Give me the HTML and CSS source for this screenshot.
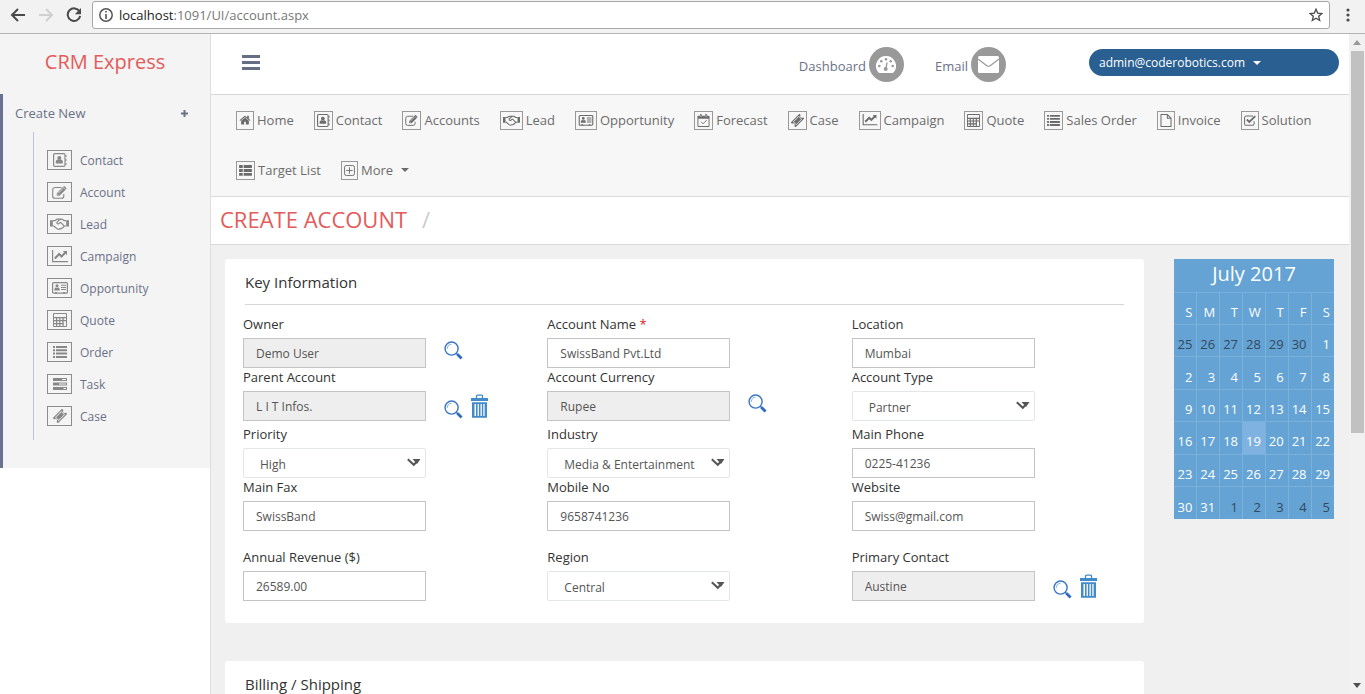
FILE: index.html
```html
<!DOCTYPE html>
<html lang="en">
<head>
<meta charset="utf-8">
<title>CRM Express - Create Account</title>
<link rel="stylesheet" href="styles.css">
</head>
<body>
<svg class="sprite" aria-hidden="true">
  <symbol id="home" viewBox="0 150 1792 1450"><path fill="currentColor" d="M1472 992v480q0 26-19 45t-45 19h-384v-384h-256v384h-384q-26 0-45-19t-19-45v-480q0-1 .5-3t.5-3l575-474 575 474q1 2 1 6zm223-69l-62 74q-8 9-21 11h-3q-13 0-21-7l-692-577-692 577q-12 8-24 7-13-2-21-11l-62-74q-8-10-7-23.5t11-21.5l719-599q32-26 76-26t76 26l244 204v-195q0-14 9-23t23-9h192q14 0 23 9t9 23v408l219 182q10 8 11 21.5t-7 23.5z"/></symbol>
  <symbol id="contact" viewBox="0 0 14 14"><rect x=".6" y=".6" width="11.4" height="12.8" rx="1.2" fill="none" stroke="currentColor" stroke-width="1.2"/><circle cx="6.3" cy="4.9" r="2" fill="currentColor"/><path fill="currentColor" d="M2.8 10.6V9c0-1.5.8-2.3 2-2.4 1 .6 2 .6 3 0 1.200.1 2 .9 2 2.400v1.600zM12.500 2h1v2h-1zM12.500 6h1v2h-1zM12.500 10h1v2h-1z"/></symbol>
  <symbol id="account" viewBox="0 0 15 13"><path fill="none" stroke="currentColor" stroke-width="1.1" d="M9.500 1.500H3A2.300 2.300 0 0 0 .7 3.800V10A2.300 2.300 0 0 0 3 12.300h6.500A2.300 2.300 0 0 0 11.800 10V8"/><path fill="currentColor" d="M4.800 9.800V7.200L10.900 1l2.700 2.700-6.100 6.100zM11.500.5c.5-.5 1-.5 1.500 0l1.200 1.200c.5.500.5 1 0 1.500l-.3.300-2.700-2.700z"/><path stroke="#f6f6f6" stroke-width=".7" d="m6.300 7.200 4.800-4.900M5.400 8l1.200 1.200"/></symbol>
  <symbol id="lead" viewBox="0 0 19 12"><path fill="currentColor" d="M0 2.200h2.800v6.300H0zM16.200 2.200H19v6.300h-2.800z"/><path fill="none" stroke="currentColor" stroke-width="1.200" stroke-linejoin="round" d="M2.800 2.700h2L7 1.200h2.200l1.300.8M2.800 8h1l3 2.600c1.200.9 2.400.8 3.200.1 1 .3 1.800-.1 2-.9.9.1 1.500-.3 1.600-1.100l.7-.7h1.900M16.200 2.700h-1.900L12.200 1.200H10L7 4.300c-.3 1 .2 1.700 1 1.700.9.1 1.500-.9 2-1.400h1l3 3.200"/></symbol>
  <symbol id="campaign" viewBox="0 0 16 13"><path fill="currentColor" d="M0 0h1.200v11H16v1.200H0zM15 1v4.200l-1.400-1.400-4.100 4.100-2.300-2.300-3.600 3.600-1.500-1.500L7.200 2.600 9.500 5l2.700-2.700L10.900 1z"/></symbol>
  <symbol id="opportunity" viewBox="0 0 16 12"><rect x=".6" y=".6" width="14.800" height="10.600" rx="1" fill="none" stroke="currentColor" stroke-width="1.200"/><circle cx="5" cy="3.800" r="1.500" fill="currentColor"/><path fill="currentColor" d="M2.300 8.500c0-1.700.4-2.900 1.500-3.100.8.5 1.700.5 2.400 0 1.200.2 1.600 1.400 1.600 3.100zM9 2.700h5v1H9zM9 4.900h5v1H9zM9 7.100h5v1H9zM3 10h2v1.500H3zM11 10h2v1.500h-2z"/></symbol>
  <symbol id="forecast" viewBox="0 0 13 14"><path fill="currentColor" fill-rule="evenodd" d="M1 1.800h1.600V1.200Q2.600 0 3.700 0t1.100 1.200v.6h3.400v-.6Q8.200 0 9.300 0t1.100 1.200v.6H12q1 0 1 1V13q0 1-1 1H1q-1 0-1-1V2.800q0-1 1-1zM1 5v8h11V5z"/><path fill="none" stroke="currentColor" d="m4 8.500 2 2 3.800-3.800"/><path stroke="#f6f6f6" stroke-width=".7" d="M3.700 1.200v2M9.300 1.200v2"/></symbol>
  <symbol id="case" viewBox="0 0 14 14"><g transform="rotate(-45 7 7)"><path fill="currentColor" fill-rule="evenodd" d="M.4 3.300h13.200v2a1.700 1.700 0 0 0 0 3.400v2H.4v-2a1.700 1.700 0 0 0 0-3.400zM2.600 4.500v5h8.800v-5z"/><path fill="currentColor" d="M3.200 5.100h7.600v3.800H3.200z"/></g></symbol>
  <symbol id="quote" viewBox="0 0 14 14"><path fill="currentColor" fill-rule="evenodd" d="M1 0h12q1 0 1 1v12q0 1-1 1H1q-1 0-1-1V1q0-1 1-1zm0 1v3h12V1zm0 4.300v1.800h2V5.300zm3.200 0v1.800h2V5.300zm3.200 0v1.800h2V5.300zm3.300 0v1.800H13V5.300zM1 8.200V10h2V8.200zm3.200 0V10h2V8.200zm3.200 0V10h2V8.200zM1 11.200V13h2v-1.800zm3.200 0V13h2v-1.800zm3.200 0V13h2v-1.800zm3.300-3V13H13V8.200z"/></symbol>
  <symbol id="order" viewBox="0 0 14 12"><path fill="currentColor" d="M0 0h2v2H0zM3 0h11v2H3zM0 3.300h2v2H0zM3 3.300h11v2H3zM0 6.600h2v2H0zM3 6.600h11v2H3zM0 9.900h2v2H0zM3 9.900h11v2H3z"/></symbol>
  <symbol id="task" viewBox="0 0 14 12"><path fill="currentColor" fill-rule="evenodd" d="M0 0h14v3H0zM9 1v1h4V1zM0 4.500h14v3H0zM6 5.500v1h7v-1zM0 9h14v3H0zM10.500 10v1H13v-1z"/></symbol>
  <symbol id="invoice" viewBox="0 0 12 14"><path fill="none" stroke="currentColor" stroke-width="1.100" stroke-linejoin="round" d="M.6.6h6.900l3.900 3.900v8.900H.6zM7.500.6v3.900h3.900"/></symbol>
  <symbol id="solution" viewBox="0 0 14 13"><path fill="none" stroke="currentColor" stroke-width="1.200" d="M10.500 1.200H2.600a2 2 0 0 0-2 2v7a2 2 0 0 0 2 2h7.200a2 2 0 0 0 2-2V7.500"/><path fill="none" stroke="currentColor" stroke-width="2.200" d="m3.200 5.300 3 3 7-7"/></symbol>
  <symbol id="target" viewBox="0 0 14 12"><path fill="currentColor" d="M0 0h4v3.200H0zM5 0h9v3.200H5zM0 4.300h4v3.200H0zM5 4.300h9v3.200H5zM0 8.600h4v3.200H0zM5 8.600h9v3.200H5z"/></symbol>
  <symbol id="more" viewBox="0 0 12 12"><rect x=".6" y=".6" width="10.800" height="10.800" rx="1.800" fill="none" stroke="currentColor"/><path stroke="currentColor" d="M2.500 6h7M6 2.500v7"/></symbol>
  <symbol id="search" viewBox="0 0 20 20"><circle cx="8" cy="8" r="6.900" fill="#fff" stroke="#3a76c4" stroke-width="1.500"/><path fill="none" stroke="#86b4e6" stroke-width="1.200" d="M3.500 8.200A4.700 4.700 0 0 1 8 3.400"/><path stroke="#3a76c4" stroke-width="1.500" d="m12.500 12.500 2 2"/><path stroke="#2f6cc0" stroke-width="3" d="m14 14 4.500 4.500"/></symbol>
  <symbol id="trash" viewBox="0 0 17 25"><path fill="none" stroke="#428bca" stroke-width="1.300" d="M5.500 4V2q0-.9.900-.9h4.200q.9 0 .9.900v2"/><path fill="#428bca" fill-rule="evenodd" d="M0 4h17v3H0zM1 8.300h15v15.500H1zM3.500 10v12H5V10zM6.600 10v12h1.300V10zM9.500 10v12h1.300V10zM12.300 10v12h1.300V10z"/></symbol>
  <symbol id="arrow" viewBox="0 0 14 9"><path fill="none" stroke="#555" stroke-width="2" d="m.8 1.200 6 5.600L10 3.500"/><path fill="#555" d="M5.500 1H13.500L10 6z"/></symbol>
</svg>

<header class="browser">
  <button class="chrome-button" aria-label="Back"><svg width="16" height="14" viewBox="0 0 16 14"><path fill="none" stroke="#4a4a4a" stroke-width="2" d="M15 7H2M8 1 2 7l6 6"/></svg></button>
  <button class="chrome-button" aria-label="Forward" disabled><svg width="16" height="14" viewBox="0 0 16 14"><path fill="none" stroke="#d0d0d0" stroke-width="2" d="M1 7h13M8 1l6 6-6 6"/></svg></button>
  <button class="chrome-button" aria-label="Reload"><svg width="16" height="16" viewBox="0 0 16 16"><path fill="none" stroke="#4a4a4a" stroke-width="2" d="M13.500 4.500A6.300 6.300 0 1 0 14.200 9"/><path fill="#4a4a4a" d="M15 1v6.200H8.800z"/></svg></button>
  <div class="omnibox">
    <svg width="14" height="14" viewBox="0 0 14 14"><circle cx="7" cy="7" r="6.200" fill="none" stroke="#555" stroke-width="1.500"/><path fill="#555" d="M6.200 3h1.600v1.600H6.200zM6.200 6h1.600v5H6.200z"/></svg>
    <div class="url"><span class="host">localhost</span>:1091/UI/account.aspx</div>
    <button class="chrome-button" aria-label="Bookmark"><svg width="14" height="14" viewBox="0 0 14 14"><path fill="none" stroke="#4a4a4a" stroke-width="1.300" d="m7 1.200 1.700 3.900 4.200.4-3.200 2.800 1 4.200L7 10.300l-3.700 2.200 1-4.200L1.100 5.500l4.200-.4z"/></svg></button>
  </div>
  <button class="chrome-button menu-dots" aria-label="Menu"><svg width="4" height="14" viewBox="0 0 4 14"><g fill="#4a4a4a"><circle cx="2" cy="2" r="1.600"/><circle cx="2" cy="7" r="1.600"/><circle cx="2" cy="12" r="1.600"/></g></svg></button>
</header>

<div class="viewport">
  <aside class="sidebar">
    <a class="brand" href="#">CRM Express</a>
    <nav class="side-menu" aria-label="Create New">
      <a class="side-head" href="#"><span>Create New</span><svg width="7" height="7" viewBox="0 0 7 7"><path stroke="currentColor" stroke-width="2" d="M3.500 0v7M0 3.500h7"/></svg></a>
      <ul class="side-list">
        <li><a href="#"><span class="side-icon"><svg width="14" height="14"><use href="#contact"/></svg></span>Contact</a></li>
        <li><a href="#"><span class="side-icon"><svg width="15" height="13"><use href="#account"/></svg></span>Account</a></li>
        <li><a href="#"><span class="side-icon"><svg width="19" height="12"><use href="#lead"/></svg></span>Lead</a></li>
        <li><a href="#"><span class="side-icon"><svg width="16" height="13"><use href="#campaign"/></svg></span>Campaign</a></li>
        <li><a href="#"><span class="side-icon"><svg width="16" height="12"><use href="#opportunity"/></svg></span>Opportunity</a></li>
        <li><a href="#"><span class="side-icon"><svg width="14" height="14"><use href="#quote"/></svg></span>Quote</a></li>
        <li><a href="#"><span class="side-icon"><svg width="14" height="12"><use href="#order"/></svg></span>Order</a></li>
        <li><a href="#"><span class="side-icon"><svg width="14" height="12"><use href="#task"/></svg></span>Task</a></li>
        <li><a href="#"><span class="side-icon"><svg width="14" height="14"><use href="#case"/></svg></span>Case</a></li>
      </ul>
    </nav>
  </aside>

  <main class="main">
    <div class="topbar">
      <button class="burger" aria-label="Toggle menu"><svg width="18" height="15" viewBox="0 0 18 15"><path stroke="#666d85" stroke-width="3" d="M0 1.500h18M0 7.500h18M0 13.500h18"/></svg></button>
      <a class="shortcut" href="#"><span class="shortcut-text">Dashboard</span><span class="disc"><svg width="20" height="18" viewBox="0 0 20 18"><path fill="#fff" d="M10 0a10 10 0 0 1 8.500 15.300q-1 1.700-2 1.700h-13q-1 0-2-1.700A10 10 0 0 1 10 0z"/><g fill="#999"><circle cx="3.300" cy="10" r="1.300"/><circle cx="5.300" cy="5.200" r="1.300"/><circle cx="10" cy="3.200" r="1.300"/><circle cx="14.700" cy="5.200" r="1.300"/><circle cx="16.700" cy="10" r="1.300"/><circle cx="9.700" cy="13" r="2"/></g><path stroke="#999" stroke-width="1.300" d="m9.800 13 1.300-6.500"/></svg></span></a>
      <a class="shortcut" href="#"><span class="shortcut-text">Email</span><span class="disc"><svg width="21" height="17" viewBox="0 0 21 17"><rect width="21" height="17" rx="1.500" fill="#fff"/><path fill="none" stroke="#999" stroke-width="1.200" d="m0 3 8.500 6.500q2 1.500 4 0L21 3"/></svg></span></a>
      <button class="user">admin@coderobotics.com <span class="caret"></span></button>
    </div>

    <nav class="modules" aria-label="Modules">
      <a href="#"><span class="box"><svg width="12" height="10"><use href="#home"/></svg></span>Home</a>
      <a href="#"><span class="box"><svg width="13" height="13"><use href="#contact"/></svg></span>Contact</a>
      <a href="#"><span class="box"><svg width="13" height="11"><use href="#account"/></svg></span>Accounts</a>
      <a href="#"><span class="box"><svg width="17" height="11"><use href="#lead"/></svg></span>Lead</a>
      <a href="#"><span class="box"><svg width="16" height="11"><use href="#opportunity"/></svg></span>Opportunity</a>
      <a href="#"><span class="box"><svg width="13" height="13"><use href="#forecast"/></svg></span>Forecast</a>
      <a href="#"><span class="box"><svg width="13" height="13"><use href="#case"/></svg></span>Case</a>
      <a href="#"><span class="box"><svg width="16" height="12"><use href="#campaign"/></svg></span>Campaign</a>
      <a href="#"><span class="box"><svg width="13" height="13"><use href="#quote"/></svg></span>Quote</a>
      <a href="#"><span class="box"><svg width="13" height="11"><use href="#order"/></svg></span>Sales Order</a>
      <a href="#"><span class="box"><svg width="12" height="13"><use href="#invoice"/></svg></span>Invoice</a>
      <a href="#"><span class="box"><svg width="12" height="11"><use href="#solution"/></svg></span>Solution</a>
      <a href="#"><span class="box"><svg width="13" height="11"><use href="#target"/></svg></span>Target List</a>
      <a href="#"><span class="box"><svg width="11" height="11"><use href="#more"/></svg></span>More <span class="caret"></span></a>
    </nav>

    <div class="title-bar"><h1>Create Account</h1><span class="slash">/</span></div>

    <div class="content">
      <form class="cards">
        <section class="card">
          <h2>Key Information</h2>
          <div class="fields">
            <div class="field"><label for="owner">Owner</label><div class="control"><input id="owner" value="Demo User" readonly><div class="tools"><button type="button" aria-label="Find owner"><svg width="19" height="19"><use href="#search"/></svg></button></div></div></div>
            <div class="field"><label for="name">Account Name <span class="required">*</span></label><div class="control"><input id="name" value="SwissBand Pvt.Ltd"></div></div>
            <div class="field"><label for="location">Location</label><div class="control"><input id="location" value="Mumbai"></div></div>

            <div class="field"><label for="parent">Parent Account</label><div class="control"><input id="parent" value="L I T Infos." readonly><div class="tools"><button type="button" aria-label="Find parent account"><svg width="19" height="19"><use href="#search"/></svg></button><button type="button" aria-label="Clear parent account"><svg width="17" height="25"><use href="#trash"/></svg></button></div></div></div>
            <div class="field"><label for="currency">Account Currency</label><div class="control"><input id="currency" value="Rupee" readonly><div class="tools"><button type="button" aria-label="Find currency"><svg width="19" height="19"><use href="#search"/></svg></button></div></div></div>
            <div class="field"><label for="type">Account Type</label><div class="control"><div class="select"><select id="type"><option>Partner</option></select><svg class="arrow" width="14" height="9"><use href="#arrow"/></svg></div></div></div>

            <div class="field third"><label for="priority">Priority</label><div class="control"><div class="select"><select id="priority"><option>High</option></select><svg class="arrow" width="14" height="9"><use href="#arrow"/></svg></div></div></div>
            <div class="field third"><label for="industry">Industry</label><div class="control"><div class="select"><select id="industry"><option>Media &amp; Entertainment</option></select><svg class="arrow" width="14" height="9"><use href="#arrow"/></svg></div></div></div>
            <div class="field third"><label for="phone">Main Phone</label><div class="control"><input id="phone" value="0225-41236"></div></div>

            <div class="field"><label for="fax">Main Fax</label><div class="control"><input id="fax" value="SwissBand"></div></div>
            <div class="field"><label for="mobile">Mobile No</label><div class="control"><input id="mobile" value="9658741236"></div></div>
            <div class="field"><label for="website">Website</label><div class="control"><input id="website" value="Swiss@gmail.com"></div></div>

            <div class="field last"><label for="revenue">Annual Revenue ($)</label><div class="control"><input id="revenue" value="26589.00"></div></div>
            <div class="field last"><label for="region">Region</label><div class="control"><div class="select"><select id="region"><option>Central</option></select><svg class="arrow" width="14" height="9"><use href="#arrow"/></svg></div></div></div>
            <div class="field last"><label for="primary">Primary Contact</label><div class="control"><input id="primary" value="Austine" readonly><div class="tools"><button type="button" aria-label="Find contact"><svg width="19" height="19"><use href="#search"/></svg></button><button type="button" aria-label="Clear contact"><svg width="17" height="25"><use href="#trash"/></svg></button></div></div></div>
          </div>
        </section>
        <section class="card">
          <h2>Billing / Shipping</h2>
        </section>
      </form>

      <table class="calendar">
        <caption>July 2017</caption>
        <thead><tr><th>S</th><th>M</th><th>T</th><th>W</th><th>T</th><th>F</th><th>S</th></tr></thead>
        <tbody>
          <tr><td class="out">25</td><td class="out">26</td><td class="out">27</td><td class="out">28</td><td class="out">29</td><td class="out">30</td><td>1</td></tr>
          <tr><td>2</td><td>3</td><td>4</td><td>5</td><td>6</td><td>7</td><td>8</td></tr>
          <tr><td>9</td><td>10</td><td>11</td><td>12</td><td>13</td><td>14</td><td>15</td></tr>
          <tr><td>16</td><td>17</td><td>18</td><td class="today">19</td><td>20</td><td>21</td><td>22</td></tr>
          <tr><td>23</td><td>24</td><td>25</td><td>26</td><td>27</td><td>28</td><td>29</td></tr>
          <tr><td>30</td><td>31</td><td class="out">1</td><td class="out">2</td><td class="out">3</td><td class="out">4</td><td class="out">5</td></tr>
        </tbody>
      </table>
    </div>
  </main>

  <div class="scrollbar" aria-hidden="true">
    <span class="scroll-arrow"><svg width="8" height="5" viewBox="0 0 8 5"><path fill="#999" d="M0 5h8L4 0z"/></svg></span>
    <span class="track"><span class="thumb"></span></span>
    <span class="scroll-arrow"><svg width="8" height="5" viewBox="0 0 8 5"><path fill="#505050" d="M0 0h8L4 5z"/></svg></span>
  </div>
</div>
</body>
</html>
```
FILE: styles.css
```css
* { box-sizing: border-box; }

body {
  margin: 0;
  height: 100vh;
  display: flex;
  flex-direction: column;
  overflow: hidden;
  font-family: "Open Sans", "Noto Sans", sans-serif;
  font-size: 13px;
  color: #333;
  background: #fff;
}

a { color: inherit; text-decoration: none; }
button { font: inherit; border: 0; padding: 0; background: none; }
svg { display: block; flex: none; }
.sprite { position: absolute; width: 0; height: 0; }

/* Browser bar */
.browser {
  display: flex;
  align-items: center;
  gap: 12px;
  flex: none;
  height: 34px;
  padding: 0 15px 4px 10px;
  background: #f2f2f2;
  border-bottom: 1px solid #b4b4b4;
}
.omnibox {
  flex: 1;
  display: flex;
  align-items: center;
  gap: 6px;
  height: 28px;
  margin: 1px 4px 0 -2px;
  padding: 0 6px;
  background: #fff;
  border: 1px solid #a8a8a8;
  border-radius: 3px;
}
.url { flex: 1; font-size: 13px; color: #777; }
.host { color: #222; }

/* Layout */
.viewport { flex: 1; display: flex; min-height: 0; }

.sidebar { flex: none; width: 210px; color: #6b7187; }
.brand {
  display: flex;
  align-items: center;
  justify-content: center;
  height: 60px;
  padding-bottom: 6px;
  background: #f4f4f4;
  color: #e35b5a;
  font-size: 20px;
}
.side-menu {
  padding-bottom: 28px;
  background: #f4f4f4;
  border-left: 3px solid #6b7190;
}
.side-head {
  display: flex;
  align-items: center;
  justify-content: space-between;
  height: 38px;
  padding: 0 22px 0 12px;
}
.side-list {
  list-style: none;
  margin: 0 0 0 30px;
  padding: 12px 0 8px 13px;
  border-left: 1px solid #b7c3dc;
}
.side-list a {
  display: flex;
  align-items: center;
  gap: 8px;
  height: 32px;
  font-size: 12px;
}
.side-icon {
  display: flex;
  align-items: center;
  justify-content: center;
  width: 25px;
  height: 20px;
  border: 1px solid #8c8c8c;
  color: #888;
}

.main {
  flex: 1;
  min-width: 0;
  overflow: hidden;
  background: #f0f0f0;
  border-left: 1px solid #dedede;
}
.topbar {
  display: flex;
  align-items: center;
  height: 61px;
  padding: 0 10px 3px 31px;
  background: #fff;
  border-bottom: 1px solid #d8d8d8;
}
.burger { margin-right: auto; }
.shortcut {
  display: flex;
  align-items: center;
  gap: 3px;
  margin: 4px 31px 0 0;
  color: #6b7187;
}
.shortcut-text { padding-top: 3px; }
.disc {
  display: flex;
  align-items: center;
  justify-content: center;
  width: 35px;
  height: 35px;
  border-radius: 50%;
  background: #999;
}
.user {
  display: flex;
  align-items: center;
  gap: 8px;
  width: 250px;
  height: 27px;
  margin-left: 52px;
  padding: 0 10px;
  border-radius: 14px;
  background: #2a6091;
  color: #fff;
  font-size: 12px;
}
.caret {
  border: 4px solid transparent;
  border-top-color: currentColor;
  border-bottom: 0;
}

.modules {
  display: flex;
  flex-wrap: wrap;
  column-gap: 20px;
  padding: 0 25px 1px;
  background: #f7f7f7;
  border-bottom: 1px solid #dcdcdc;
  color: #6c6c6c;
}
.modules a { display: flex; align-items: center; gap: 3px; height: 50px; }
.modules .caret { margin-left: 5px; }
.box {
  display: flex;
  align-items: center;
  justify-content: center;
  height: 19px;
  padding: 0 2px;
  border: 1px solid #999;
}

.title-bar {
  display: flex;
  align-items: center;
  gap: 15px;
  height: 48px;
  padding: 0 9px 3px;
  background: #fff;
  border-bottom: 1px solid #d8d8d8;
  font-size: 22px;
}
h1 {
  margin: 0;
  font-size: 22px;
  font-weight: 400;
  text-transform: uppercase;
  color: #e35b5a;
}
.slash { color: #ccc; }

.content {
  display: flex;
  align-items: flex-start;
  gap: 30px;
  padding: 14px 15px 0 14px;
}
.cards { flex: 1; display: flex; flex-direction: column; gap: 38px; }
.card { background: #fff; border-radius: 3px; padding-bottom: 22px; }
h2 {
  margin: 0 20px 10px;
  height: 46px;
  line-height: 46px;
  border-bottom: 1px solid #d6d6d6;
  font-size: 15px;
  font-weight: 400;
}

/* Form */
.fields {
  display: grid;
  grid-template-columns: repeat(3, 1fr);
  padding: 0 3px;
}
.field { padding: 0 15px; }
.third { padding-top: 4px; }
.last { padding-top: 17px; }
label { display: block; height: 23px; line-height: 18px; }
.required { color: #e02222; }
.control { display: flex; gap: 18px; height: 30px; }
input, .select { flex: none; width: calc(200% / 3); height: 30px; }
input, select {
  font: inherit;
  font-size: 12px;
  color: #555;
  border: 1px solid #c4c4c4;
  border-radius: 0;
  background: #fff;
}
input { padding: 0 12px; }
input:read-only { background: #eee; }
.select { position: relative; }
select {
  appearance: none;
  width: 100%;
  height: 100%;
  padding: 2px 16px 0;
  border-color: #e3e6e8;
  border-radius: 2px;
}
.arrow { position: absolute; top: 10px; right: 5px; pointer-events: none; }
.tools { display: flex; align-items: flex-end; align-self: flex-start; gap: 8px; padding-top: 3px; }

/* Calendar */
.calendar {
  width: 160px;
  height: 227px;
  flex: none;
  table-layout: fixed;
  border-collapse: collapse;
  background: #64a3d4;
  color: #fff;
}
.calendar caption {
  height: 33px;
  line-height: 29px;
  background: #64a3d4;
  font-size: 20px;
}
.calendar th, .calendar td {
  height: 32px;
  padding: 7px 4px 0 0;
  border: 1px solid #7ab2de;
  border-width: 1px 0 0 1px;
  font-weight: 400;
  text-align: right;
}
.calendar th:first-child, .calendar td:first-child { border-left: 0; }
.calendar .out { color: #34495c; }
.calendar .today { background: #7fb1e1; }

.scrollbar {
  display: flex;
  flex-direction: column;
  flex: none;
  width: 16px;
  background: #f1f1f1;
}
.scroll-arrow { display: flex; align-items: center; justify-content: center; height: 17px; }
.track { flex: 1; padding: 0 1px 0 2px; }
.thumb { display: block; height: 61%; background: #c1c1c1; }
```
